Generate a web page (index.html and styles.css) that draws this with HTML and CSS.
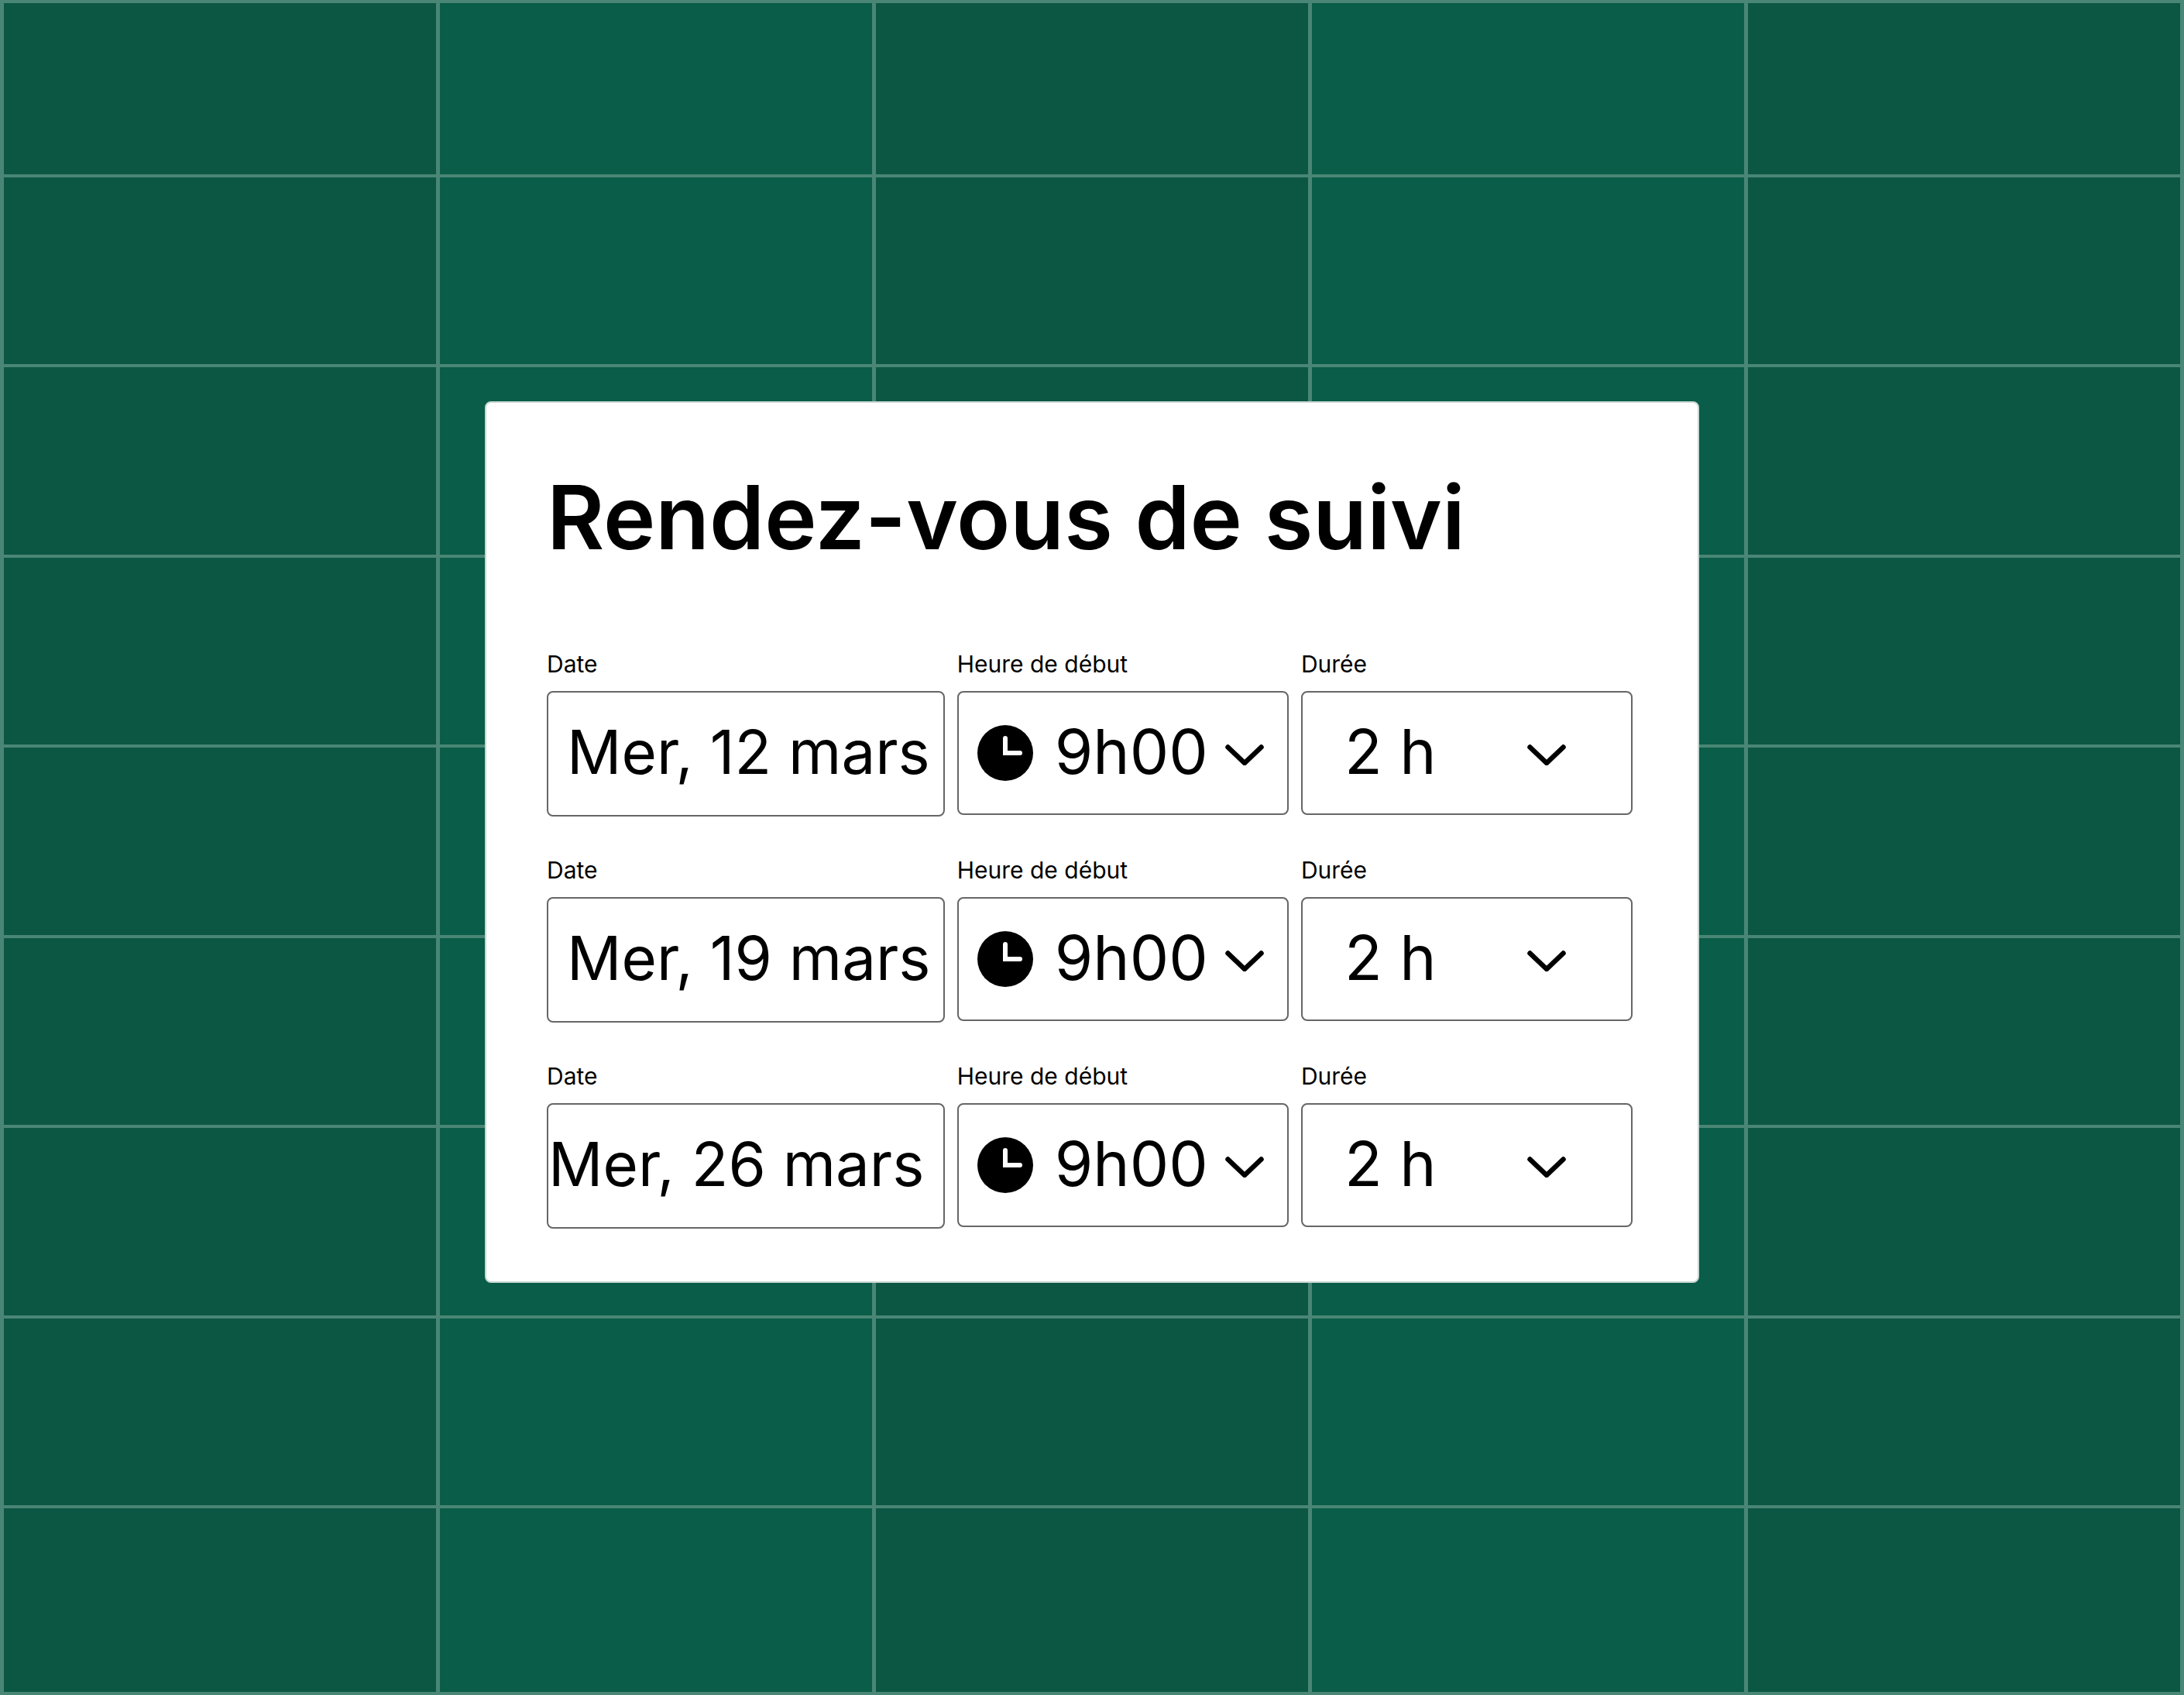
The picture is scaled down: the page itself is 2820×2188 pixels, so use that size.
FILE: index.html
```html
<!DOCTYPE html>
<html lang="fr">
<head>
  <meta charset="utf-8">
  <meta name="viewport" content="width=device-width, initial-scale=1">
  <title>Rendez-vous de suivi</title>
  <link rel="stylesheet" href="styles.css">
</head>
<body>
  <svg class="symbols" aria-hidden="true">
    <symbol id="icon-clock" viewBox="0 0 72 72">
      <circle cx="36" cy="36" r="36" fill="#000"/>
      <path d="M36 17V36H55" fill="none" stroke="#fff" stroke-width="6" stroke-linecap="round" stroke-linejoin="miter"/>
    </symbol>
    <symbol id="icon-chevron" viewBox="0 0 50 32">
      <path d="M3.5 8.5L25 29L46.5 8.5" fill="none" stroke="#000" stroke-width="6.5" stroke-linecap="round" stroke-linejoin="round"/>
    </symbol>
  </svg>

  <div class="page">
    <div class="calendar" aria-hidden="true">
      <div class="day"></div>
      <div class="day day-light"></div>
      <div class="day"></div>
      <div class="day day-light"></div>
      <div class="day"></div>
    </div>

    <main class="content">
      <form class="card">
        <h1 class="title">Rendez-vous de suivi</h1>

        <div class="rows">
          <div class="row">
            <div class="field">
              <label class="label" for="date-1">Date</label>
              <div class="control control-date"><input class="date" id="date-1" type="text" value="Mer, 12 mars"></div>
            </div>
            <div class="field">
              <label class="label" for="start-1">Heure de début</label>
              <div class="control control-time">
                <svg class="clock" aria-hidden="true"><use href="#icon-clock"/></svg>
                <select class="select" id="start-1"><option>9h00</option></select>
                <svg class="chevron" aria-hidden="true"><use href="#icon-chevron"/></svg>
              </div>
            </div>
            <div class="field">
              <label class="label" for="length-1">Durée</label>
              <div class="control control-length">
                <select class="select" id="length-1"><option>2 h</option></select>
                <svg class="chevron" aria-hidden="true"><use href="#icon-chevron"/></svg>
              </div>
            </div>
          </div>

          <div class="row">
            <div class="field">
              <label class="label" for="date-2">Date</label>
              <div class="control control-date"><input class="date" id="date-2" type="text" value="Mer, 19 mars"></div>
            </div>
            <div class="field">
              <label class="label" for="start-2">Heure de début</label>
              <div class="control control-time">
                <svg class="clock" aria-hidden="true"><use href="#icon-clock"/></svg>
                <select class="select" id="start-2"><option>9h00</option></select>
                <svg class="chevron" aria-hidden="true"><use href="#icon-chevron"/></svg>
              </div>
            </div>
            <div class="field">
              <label class="label" for="length-2">Durée</label>
              <div class="control control-length">
                <select class="select" id="length-2"><option>2 h</option></select>
                <svg class="chevron" aria-hidden="true"><use href="#icon-chevron"/></svg>
              </div>
            </div>
          </div>

          <div class="row">
            <div class="field">
              <label class="label" for="date-3">Date</label>
              <div class="control control-date control-flush"><input class="date" id="date-3" type="text" value="Mer, 26 mars"></div>
            </div>
            <div class="field">
              <label class="label" for="start-3">Heure de début</label>
              <div class="control control-time">
                <svg class="clock" aria-hidden="true"><use href="#icon-clock"/></svg>
                <select class="select" id="start-3"><option>9h00</option></select>
                <svg class="chevron" aria-hidden="true"><use href="#icon-chevron"/></svg>
              </div>
            </div>
            <div class="field">
              <label class="label" for="length-3">Durée</label>
              <div class="control control-length">
                <select class="select" id="length-3"><option>2 h</option></select>
                <svg class="chevron" aria-hidden="true"><use href="#icon-chevron"/></svg>
              </div>
            </div>
          </div>
        </div>
      </form>
    </main>
  </div>
</body>
</html>
```
FILE: styles.css
```css
:root {
  --green: #0c5743;
  --green-light: #0a5d48;
  --line: #4a8675;
  --field-border: #666;
}

*,
*::before,
*::after {
  box-sizing: border-box;
}

body {
  margin: 0;
  font-family: Inter, "Liberation Sans", sans-serif;
  color: #000;
}

.symbols {
  display: none;
}

/* The calendar and the card share one grid cell, card on top. */
.page {
  display: grid;
  min-height: 100vh;
}

.calendar,
.content {
  grid-area: 1 / 1;
}

.calendar {
  display: grid;
  grid-template-columns: repeat(5, 1fr);
  gap: 5px;
  padding: 4px 5px;
  background: var(--line);
}

/* Two hour lines per tile. */
.day {
  background-color: var(--green);
  background-image: linear-gradient(
    transparent 221px,
    var(--line) 221px 225px,
    transparent 225px 466px,
    var(--line) 466px 470px,
    transparent 470px
  );
  background-size: 100% 491px;
}

.day-light {
  background-color: var(--green-light);
}

.content {
  display: flex;
  align-items: center;
  justify-content: center;
  padding: 40px 40px 54px;
}

.card {
  width: 100%;
  max-width: 1568px;
  padding: 88px 84px 68px 78px;
  border: 2px solid #c9d8d3;
  border-radius: 8px;
  background: #fff;
}

.title {
  margin: 0 0 110px;
  font-size: 114px;
  font-weight: 600;
  line-height: 120px;
}

.rows {
  display: grid;
  gap: 50px;
}

.row {
  display: grid;
  grid-template-columns: 6fr 5fr 5fr;
  align-items: start;
  gap: 16px;
}

.field {
  display: grid;
  grid-template-columns: minmax(0, 1fr);
  gap: 16px;
  min-width: 0;
}

.label {
  font-size: 30px;
  line-height: 38px;
}

.control {
  display: flex;
  align-items: center;
  height: 160px;
  border: 2px solid var(--field-border);
  border-radius: 8px;
  background: #fff;
}

.control-date {
  height: 162px;
  padding-left: 24px;
}

.control-flush {
  padding-left: 0;
}

.control-time {
  padding: 0 30px 0 24px;
}

.control-length {
  padding: 0 84px 0 54px;
}

.date,
.select {
  flex: 1;
  min-width: 0;
  margin: 0;
  padding: 0 0 6px;
  border: 0;
  background: none;
  appearance: none;
  font-family: inherit;
  color: inherit;
  line-height: 100px;
}

.date {
  height: 106px;
  font-size: 78px;
}

.select {
  padding-bottom: 4px;
  font-size: 80px;
}

.clock {
  flex: none;
  width: 72px;
  height: 72px;
  margin-right: 28px;
}

.chevron {
  flex: none;
  width: 50px;
  height: 32px;
}
```
